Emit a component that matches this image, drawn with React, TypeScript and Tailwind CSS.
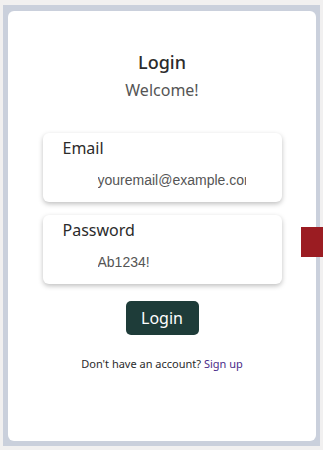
export default function App() {
  return (
    <div className="relative h-[450px] w-[323px] overflow-hidden bg-[#f1f0f0] pl-[3px] pr-[3px] pt-[5px] pb-[4px] font-['Noto_Sans',sans-serif]">
      <div className="h-full w-full bg-[#cad0dc] pl-[5px] pr-[4px] pt-[6px] pb-[5px]">
        <div className="flex h-full w-full flex-col items-center rounded-[6px] bg-white pt-[38px]">
          <h1 className="text-[18px] font-medium leading-[26px] text-[#2b2b2b]">Login</h1>
          <p className="mt-[4px] text-[16px] leading-[22px] text-[#555]">Welcome!</p>

          <div className="mt-[32px] flex w-[239px] flex-col gap-[13px]">
            <Field label="Email" value="youremail@example.com" />
            <Field label="Password" value="Ab1234!" />
          </div>

          <button className="mt-[17px] h-[34px] w-[73px] rounded-[5px] bg-[#1e3c39] text-[16px] text-white">
            Login
          </button>

          <p className="mt-[21px] text-[11px] text-[#2b2b2b]">
            Don't have an account? <a className="text-[#4a2a88]">Sign up</a>
          </p>
        </div>
      </div>
      <div className="absolute left-[301px] top-[227px] h-[30px] w-[22px] bg-[#9b1c22]" />
    </div>
  );
}

function Field({ label, value }: { label: string; value: string }) {
  return (
    <div className="flex h-[69px] flex-col rounded-[6px] bg-white pl-[20px] pt-[3px] shadow-[0_2px_5px_rgba(0,0,0,0.25)]">
      <label className="text-[16px] leading-[24px] text-[#2b2b2b]">{label}</label>
      <input
        readOnly
        value={value}
        className="mt-[10px] w-[148px] ml-[35px] bg-transparent font-['Liberation_Sans',Arial,sans-serif] text-[14px] text-[#555] outline-none"
      />
    </div>
  );
}
